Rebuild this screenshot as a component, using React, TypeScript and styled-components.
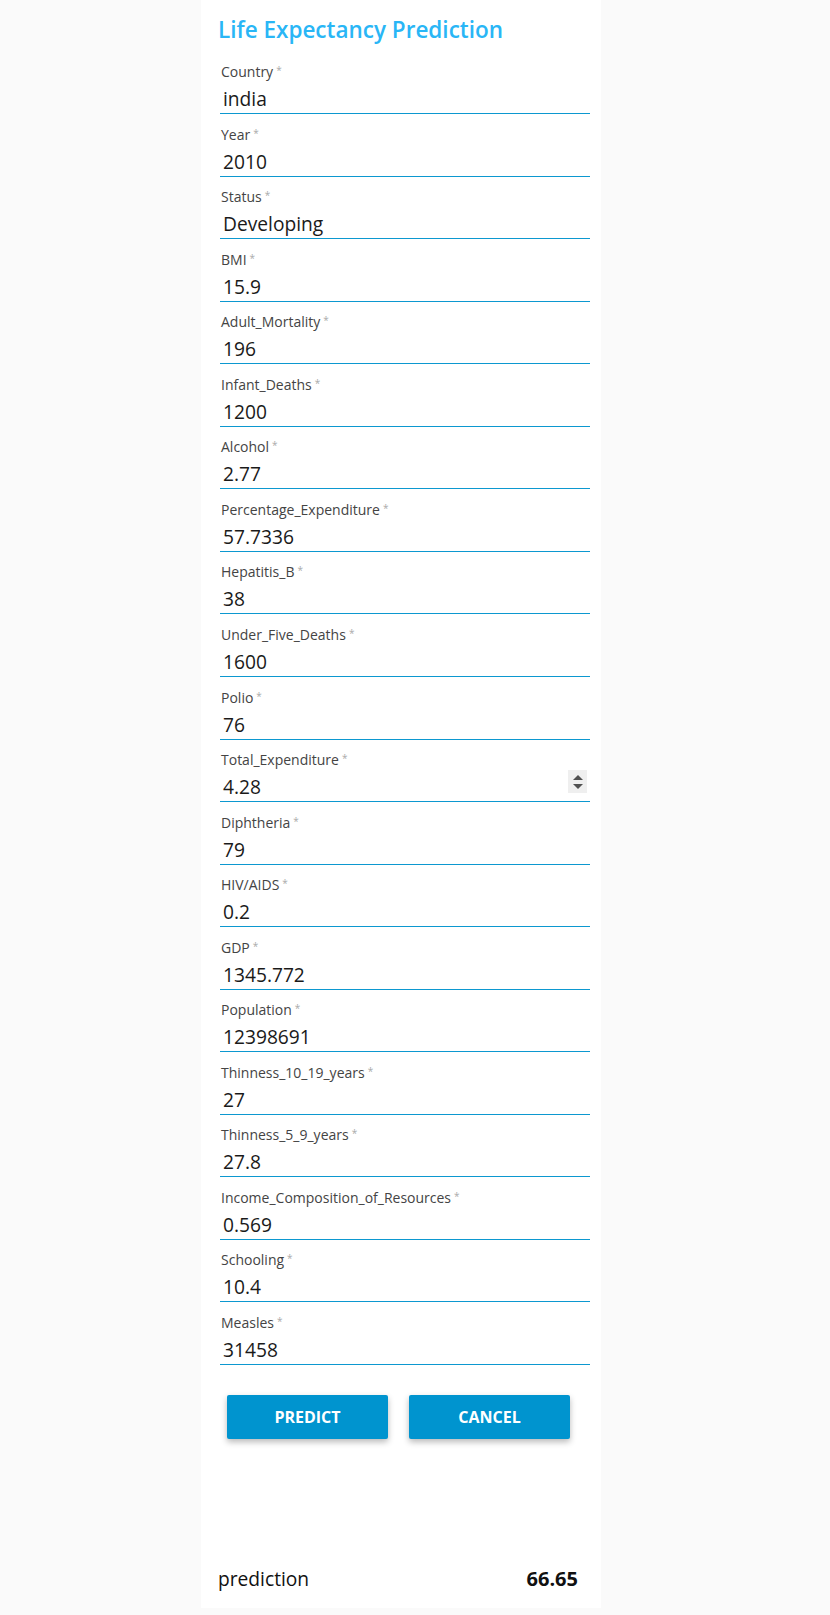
import React from "react";
import styled, { createGlobalStyle } from "styled-components";

const GlobalStyle = createGlobalStyle`
  body {
    margin: 0;
    background: #fafafa;
    font-family: "Open Sans", "Noto Sans", sans-serif;
  }
`;

const Panel = styled.div`
  width: 400px;
  margin-left: 201px;
  padding: 0 11px 15px 19px;
  box-sizing: border-box;
  background: #ffffff;
`;

const Title = styled.h1`
  margin: 0 0 6.5px -2px;
  padding-top: 15px;
  font-size: 22.5px;
  line-height: 30px;
  font-weight: 600;
  color: #29b6f6;
`;

const Field = styled.div`
  height: 62.55px;
  display: flex;
  flex-direction: column;
  justify-content: flex-end;
  position: relative;
`;

const Label = styled.label`
  font-size: 14px;
  line-height: 18px;
  color: #444;
  padding-left: 1px;
`;

const Required = styled.span`
  font-size: 10px;
  color: #aaa;
  vertical-align: top;
  margin-left: 3px;
  position: relative;
  top: -2px;
`;

const Input = styled.div`
  height: 29px;
  line-height: 29px;
  padding: 3px 3px 0;
  font-size: 19.2px;
  color: #1a1a1a;
  border-bottom: 1px solid #0c98d0;
`;

const Spinner = styled.div`
  position: absolute;
  right: 3px;
  bottom: 9px;
  width: 19px;
  height: 23px;
  background: #efefef;
  display: flex;
  flex-direction: column;
  align-items: center;
  justify-content: center;
  gap: 4px;
`;

const Arrow = styled.div<{ down?: boolean }>`
  width: 0;
  height: 0;
  border-left: 5px solid transparent;
  border-right: 5px solid transparent;
  ${(p) =>
    p.down
      ? "border-top: 5px solid #505050;"
      : "border-bottom: 5px solid #505050;"}
`;

const ButtonRow = styled.div`
  display: flex;
  gap: 21px;
  padding-left: 7px;
  margin-top: 30px;
`;

const Button = styled.button`
  width: 161px;
  height: 44px;
  border: none;
  border-radius: 2px;
  background: #0094cf;
  color: #fff;
  font-family: "Open Sans", "Noto Sans", sans-serif;
  font-size: 16px;
  font-weight: 700;
  text-transform: uppercase;
  box-shadow: 0 3px 6px rgba(0, 0, 0, 0.28);
  cursor: pointer;
`;

const Result = styled.div`
  margin-top: 126px;
  display: flex;
  justify-content: space-between;
  align-items: center;
  padding: 0 12px 0 0;
  margin-left: -2px;
  font-size: 19.2px;
  line-height: 28px;
  color: #111;
`;

const ResultValue = styled.span`
  font-size: 20px;
  font-weight: 700;
`;

const fields: [string, string][] = [
  ["Country", "india"],
  ["Year", "2010"],
  ["Status", "Developing"],
  ["BMI", "15.9"],
  ["Adult_Mortality", "196"],
  ["Infant_Deaths", "1200"],
  ["Alcohol", "2.77"],
  ["Percentage_Expenditure", "57.7336"],
  ["Hepatitis_B", "38"],
  ["Under_Five_Deaths", "1600"],
  ["Polio", "76"],
  ["Total_Expenditure", "4.28"],
  ["Diphtheria", "79"],
  ["HIV/AIDS", "0.2"],
  ["GDP", "1345.772"],
  ["Population", "12398691"],
  ["Thinness_10_19_years", "27"],
  ["Thinness_5_9_years", "27.8"],
  ["Income_Composition_of_Resources", "0.569"],
  ["Schooling", "10.4"],
  ["Measles", "31458"],
];

export default function App() {
  return (
    <>
      <GlobalStyle />
      <Panel>
        <Title>Life Expectancy Prediction</Title>
        {fields.map(([name, value]) => (
          <Field key={name}>
            <Label>
              {name}
              <Required>*</Required>
            </Label>
            <Input>{value}</Input>
            {name === "Total_Expenditure" && (
              <Spinner>
                <Arrow />
                <Arrow down />
              </Spinner>
            )}
          </Field>
        ))}
        <ButtonRow>
          <Button>Predict</Button>
          <Button>Cancel</Button>
        </ButtonRow>
        <Result>
          <span>prediction</span>
          <ResultValue>66.65</ResultValue>
        </Result>
      </Panel>
    </>
  );
}
